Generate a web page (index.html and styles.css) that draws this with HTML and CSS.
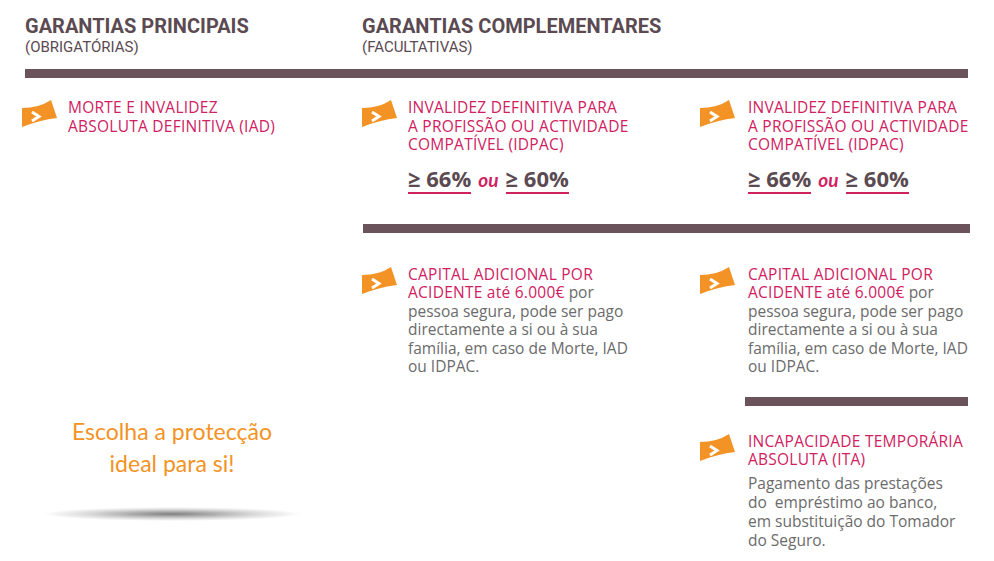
FILE: index.html
```html
<!DOCTYPE html>
<html lang="pt">
<head>
<meta charset="utf-8">
<title>Garantias</title>
<link rel="stylesheet" href="styles.css">
</head>
<body>
<div class="page">
  <div class="heads">
    <div class="head">
      <h2 class="head-title">GARANTIAS PRINCIPAIS</h2>
      <p class="head-sub">(OBRIGATÓRIAS)</p>
    </div>
    <div class="head">
      <h2 class="head-title">GARANTIAS COMPLEMENTARES</h2>
      <p class="head-sub">(FACULTATIVAS)</p>
    </div>
  </div>
  <div class="bar bar-main"></div>

  <div class="grid">
    <div class="item c1 r1">
      <svg class="icon" viewBox="0 0 36 28"><path d="M0 8 Q17 8 29 0 L35 18 Q18 20 0 27 Z" fill="#f39325"/><path d="M10 12 L17 16.5 L10 21" fill="none" stroke="#fff" stroke-width="3"/></svg>
      <div class="text"><p class="title">MORTE E INVALIDEZ<br>ABSOLUTA DEFINITIVA (IAD)</p></div>
    </div>

    <div class="item c2 r1">
      <svg class="icon" viewBox="0 0 36 28"><path d="M0 8 Q17 8 29 0 L35 18 Q18 20 0 27 Z" fill="#f39325"/><path d="M10 12 L17 16.5 L10 21" fill="none" stroke="#fff" stroke-width="3"/></svg>
      <div class="text">
        <p class="title">INVALIDEZ DEFINITIVA PARA<br>A PROFISSÃO OU ACTIVIDADE<br>COMPATÍVEL (IDPAC)</p>
        <p class="pct"><span class="pct-val">≥ 66%</span><span class="or">ou</span><span class="pct-val">≥ 60%</span></p>
      </div>
    </div>

    <div class="item c3 r1">
      <svg class="icon" viewBox="0 0 36 28"><path d="M0 8 Q17 8 29 0 L35 18 Q18 20 0 27 Z" fill="#f39325"/><path d="M10 12 L17 16.5 L10 21" fill="none" stroke="#fff" stroke-width="3"/></svg>
      <div class="text">
        <p class="title">INVALIDEZ DEFINITIVA PARA<br>A PROFISSÃO OU ACTIVIDADE<br>COMPATÍVEL (IDPAC)</p>
        <p class="pct"><span class="pct-val">≥ 66%</span><span class="or">ou</span><span class="pct-val">≥ 60%</span></p>
      </div>
    </div>

    <div class="bar bar-mid"></div>

    <div class="item c2 r3">
      <svg class="icon" viewBox="0 0 36 28"><path d="M0 8 Q17 8 29 0 L35 18 Q18 20 0 27 Z" fill="#f39325"/><path d="M10 12 L17 16.5 L10 21" fill="none" stroke="#fff" stroke-width="3"/></svg>
      <div class="text">
        <p class="body"><span class="title">CAPITAL ADICIONAL POR<br>ACIDENTE até 6.000€</span> por<br>pessoa segura, pode ser pago<br>directamente a si ou à sua<br>família, em caso de Morte, IAD<br>ou IDPAC.</p>
      </div>
    </div>

    <div class="item c3 r3">
      <svg class="icon" viewBox="0 0 36 28"><path d="M0 8 Q17 8 29 0 L35 18 Q18 20 0 27 Z" fill="#f39325"/><path d="M10 12 L17 16.5 L10 21" fill="none" stroke="#fff" stroke-width="3"/></svg>
      <div class="text">
        <p class="body"><span class="title">CAPITAL ADICIONAL POR<br>ACIDENTE até 6.000€</span> por<br>pessoa segura, pode ser pago<br>directamente a si ou à sua<br>família, em caso de Morte, IAD<br>ou IDPAC.</p>
      </div>
    </div>

    <div class="bar bar-short"></div>

    <div class="item c3 r5">
      <svg class="icon" viewBox="0 0 36 28"><path d="M0 8 Q17 8 29 0 L35 18 Q18 20 0 27 Z" fill="#f39325"/><path d="M10 12 L17 16.5 L10 21" fill="none" stroke="#fff" stroke-width="3"/></svg>
      <div class="text">
        <p class="title">INCAPACIDADE TEMPORÁRIA<br>ABSOLUTA (ITA)</p>
        <p class="body body-gap">Pagamento das prestações<br>do&nbsp; empréstimo ao banco,<br>em substituição do Tomador<br>do Seguro.</p>
      </div>
    </div>

    <div class="slogan">
      <p class="slogan-text">Escolha a protecção<br>ideal para si!</p>
      <div class="shadow"></div>
    </div>
  </div>
</div>
</body>
</html>
```

FILE: styles.css
```css
* { box-sizing: border-box; }
html, body { margin: 0; padding: 0; background: #fff; }
body { font-family: "Open Sans", "Noto Sans", sans-serif; }
p, h2 { margin: 0; }

.page {
  width: 994px;
  height: 561px;
  padding: 14px 0 0 22px;
  overflow: hidden;
}

.heads {
  display: grid;
  grid-template-columns: 337px 1fr;
  padding-left: 3px;
}
.head-title {
  font-family: Roboto, "Liberation Sans", sans-serif;
  font-weight: 700;
  font-size: 20px;
  line-height: 24px;
  color: #5b4a52;
}
.head-sub {
  font-family: Roboto, "Liberation Sans", sans-serif;
  font-size: 15px;
  line-height: 19px;
  color: #5b4a52;
}

.bar { background: #6a535a; height: 9px; }
.bar-main { margin: 12px 26px 0 3px; }

.grid {
  display: grid;
  grid-template-columns: 340px 338px 270px;
  margin-top: 20px;
}
.c1 { grid-column: 1; }
.c2 { grid-column: 2; }
.c3 { grid-column: 3; }
.r1 { grid-row: 1; }
.r3 { grid-row: 3; }
.r5 { grid-row: 5; }

.bar-mid { grid-column: 2 / 4; grid-row: 2; margin: 30px 0 32px 1px; }
.bar-short { grid-column: 3; grid-row: 4; margin: 21px 2px 26px 45px; }

.item { display: flex; align-items: flex-start; }
.icon { width: 36px; height: 28px; flex: none; margin-top: 2px; }
.text { margin-left: 10px; }
.c3 .text { margin-left: 12px; }

.title {
  font-size: 15.5px;
  line-height: 18.5px;
  color: #d0215f;
  letter-spacing: 0.25px;
}
.body {
  font-size: 15.5px;
  line-height: 18.5px;
  color: #6b6b6b;
}
.body-gap { margin-top: 5px; line-height: 19.2px; }

.pct {
  margin-top: 10px;
  display: flex;
  align-items: baseline;
  gap: 7px;
}
.pct-val {
  font-weight: 700;
  font-size: 22px;
  line-height: 28px;
  color: #5b4a52;
  border-bottom: 2px solid #d0215f;
}
.or {
  font-family: Lato, sans-serif;
  font-style: italic;
  font-weight: 700;
  font-size: 19px;
  color: #d0215f;
}

.slogan {
  grid-column: 1;
  grid-row: 3 / 6;
  align-self: start;
  margin-top: 150px;
  width: 300px;
  display: flex;
  flex-direction: column;
  align-items: center;
}
.slogan-text {
  font-family: Lato, sans-serif;
  font-size: 23px;
  line-height: 32px;
  color: #f39325;
  text-align: center;
}
.shadow {
  margin-top: 28px;
  width: 260px;
  height: 14px;
  background: radial-gradient(ellipse at center, rgba(0,0,0,0.5) 0%, rgba(0,0,0,0.15) 45%, rgba(0,0,0,0) 70%);
}
```
